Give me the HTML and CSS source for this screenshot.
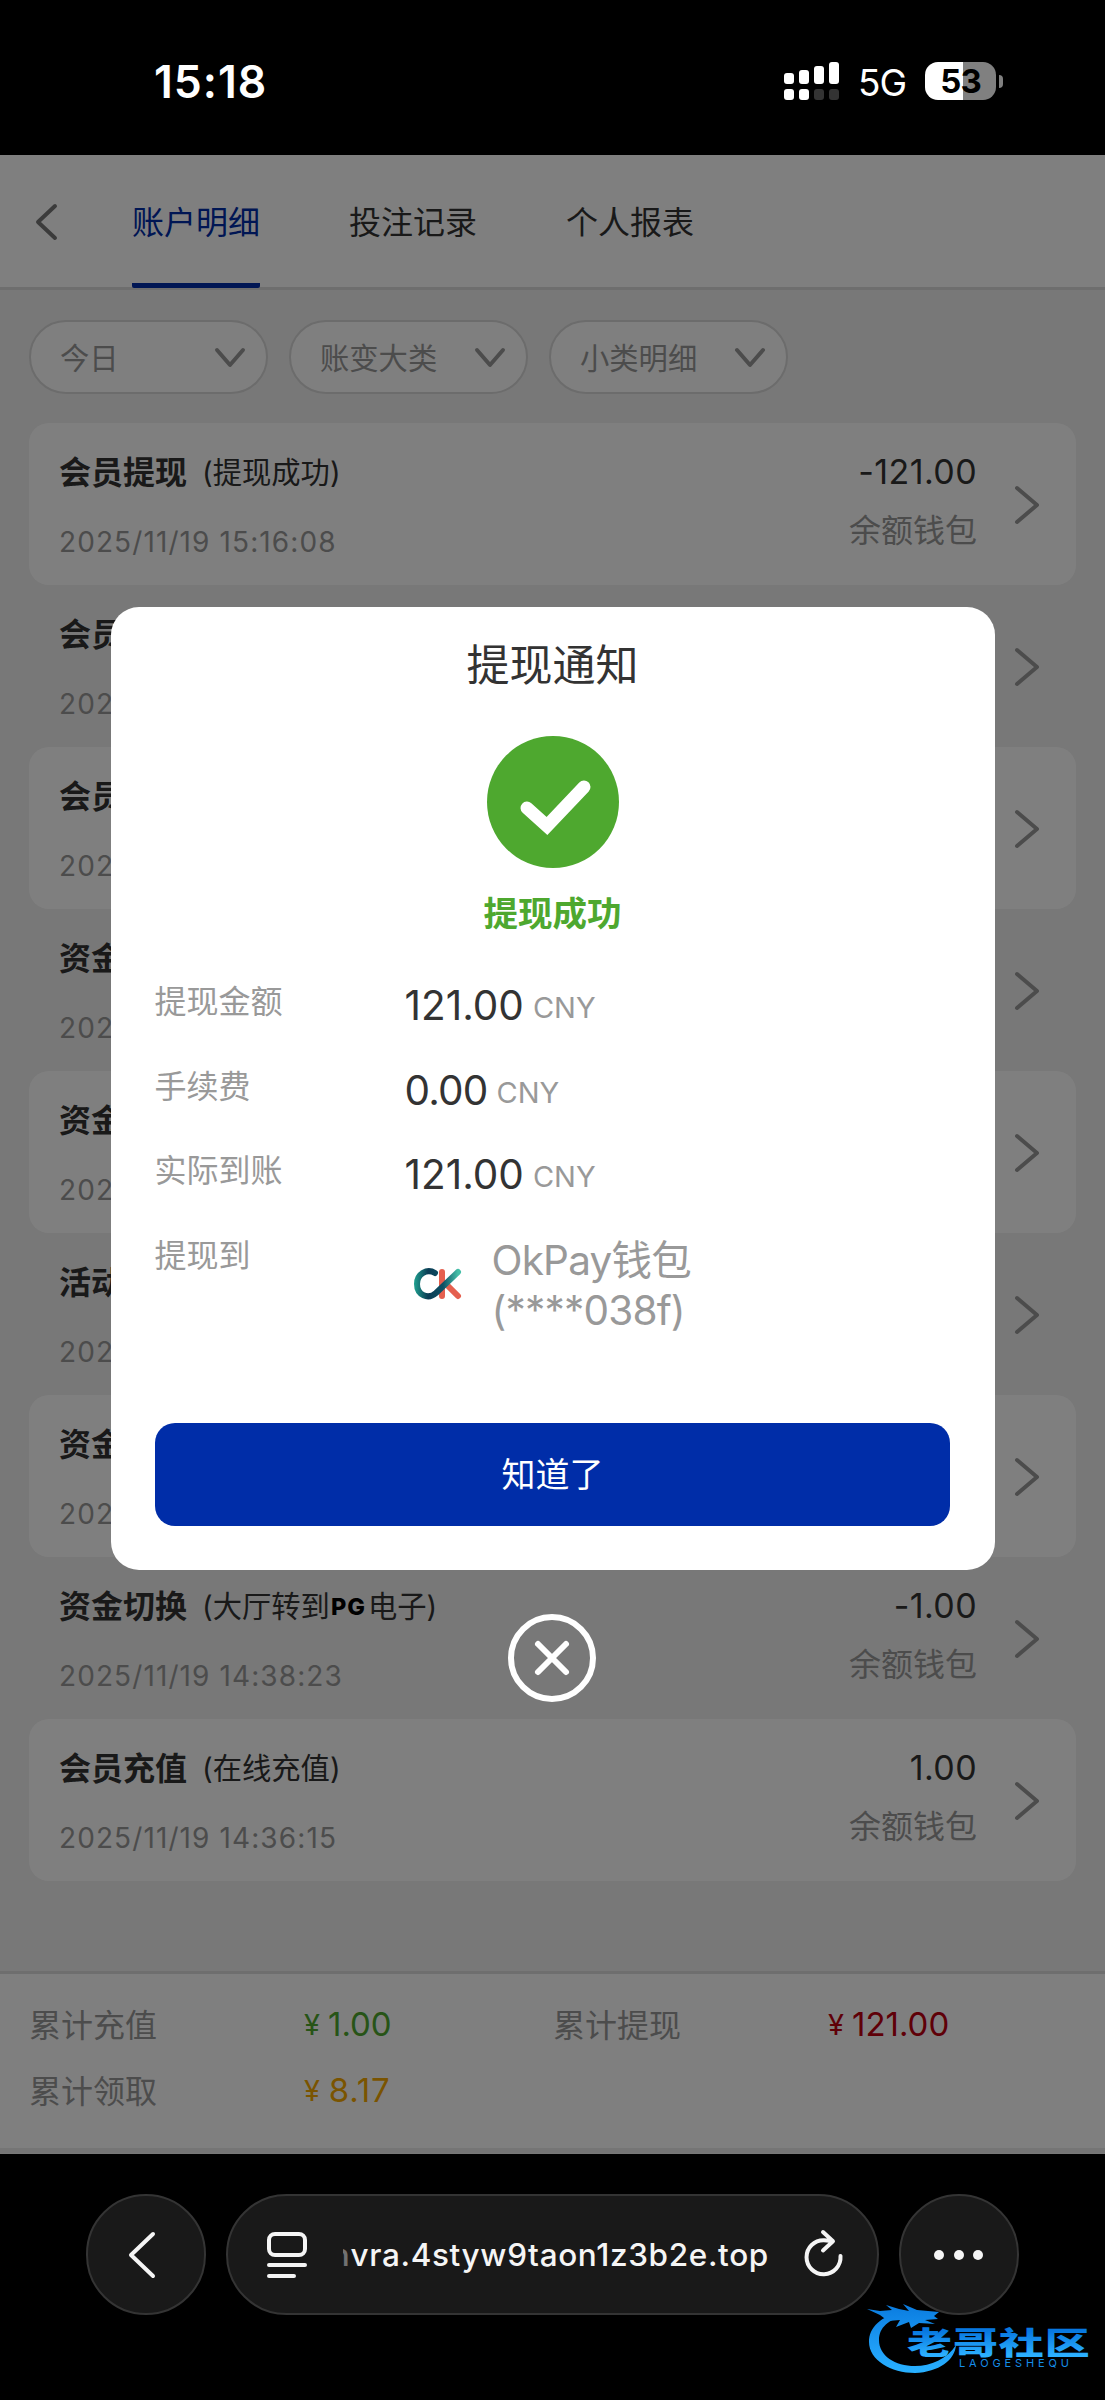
FILE: index.html
```html
<!DOCTYPE html>
<html lang="zh-CN">
<head>
<meta charset="utf-8">
<title>账户明细</title>
<link rel="stylesheet" href="styles.css">
</head>
<body>
<div class="phone">
  <header class="status">
    <span class="clock">15:18</span>
    <svg class="signal" width="56" height="38" viewBox="0 0 56 38">
      <g fill="#fff"><rect x="0" y="11" width="10" height="11" rx="3"/><rect x="15" y="8" width="10" height="14" rx="3"/><rect x="30" y="4" width="10" height="18" rx="3"/><rect x="45" y="0" width="10" height="22" rx="3"/><rect x="0" y="27" width="10" height="11" rx="3"/><rect x="15" y="27" width="10" height="11" rx="3"/></g>
      <g fill="#333"><rect x="30" y="27" width="10" height="11" rx="3"/><rect x="45" y="27" width="10" height="11" rx="3"/></g>
    </svg>
    <span class="net">5G</span>
    <span class="battery">53</span>
    <span class="nub"></span>
  </header>

  <main class="page">
    <nav class="tabs">
      <svg class="back" width="24" height="38" viewBox="0 0 24 38"><path d="M22 3 L5 19 L22 35"/></svg>
      <span class="tab active">账户明细</span>
      <span class="tab">投注记录</span>
      <span class="tab">个人报表</span>
    </nav>
    <div class="filters">
      <div class="filter">今日<svg width="32" height="22" viewBox="0 0 32 22"><path d="M3 3 L16 18 L29 3"/></svg></div>
      <div class="filter">账变大类<svg width="32" height="22" viewBox="0 0 32 22"><path d="M3 3 L16 18 L29 3"/></svg></div>
      <div class="filter">小类明细<svg width="32" height="22" viewBox="0 0 32 22"><path d="M3 3 L16 18 L29 3"/></svg></div>
    </div>
    <section class="list">
      <article class="row"><div class="info"><h3>会员提现<small>(提现成功)</small></h3><time>2025/11/19 15:16:08</time></div><div class="sum"><b>-121.00</b><span>余额钱包</span></div><svg class="go" width="28" height="42" viewBox="0 0 28 42"><path d="M4 4 L24 21 L4 38"/></svg></article>
      <article class="row"><div class="info"><h3>会员</h3><time>2025</time></div><svg class="go" width="28" height="42" viewBox="0 0 28 42"><path d="M4 4 L24 21 L4 38"/></svg></article>
      <article class="row"><div class="info"><h3>会员</h3><time>2025</time></div><svg class="go" width="28" height="42" viewBox="0 0 28 42"><path d="M4 4 L24 21 L4 38"/></svg></article>
      <article class="row"><div class="info"><h3>资金</h3><time>2025</time></div><svg class="go" width="28" height="42" viewBox="0 0 28 42"><path d="M4 4 L24 21 L4 38"/></svg></article>
      <article class="row"><div class="info"><h3>资金</h3><time>2025</time></div><svg class="go" width="28" height="42" viewBox="0 0 28 42"><path d="M4 4 L24 21 L4 38"/></svg></article>
      <article class="row"><div class="info"><h3>活动</h3><time>2025</time></div><svg class="go" width="28" height="42" viewBox="0 0 28 42"><path d="M4 4 L24 21 L4 38"/></svg></article>
      <article class="row"><div class="info"><h3>资金</h3><time>2025</time></div><svg class="go" width="28" height="42" viewBox="0 0 28 42"><path d="M4 4 L24 21 L4 38"/></svg></article>
      <article class="row"><div class="info"><h3>资金切换<small>(大厅转到<i class="pg">PG</i>电子)</small></h3><time>2025/11/19 14:38:23</time></div><div class="sum"><b>-1.00</b><span>余额钱包</span></div><svg class="go" width="28" height="42" viewBox="0 0 28 42"><path d="M4 4 L24 21 L4 38"/></svg></article>
      <article class="row"><div class="info"><h3>会员充值<small>(在线充值)</small></h3><time>2025/11/19 14:36:15</time></div><div class="sum"><b>1.00</b><span>余额钱包</span></div><svg class="go" width="28" height="42" viewBox="0 0 28 42"><path d="M4 4 L24 21 L4 38"/></svg></article>
    </section>
    <footer class="totals">
      <span>累计充值</span><b class="in"><i>¥</i>1.00</b>
      <span>累计提现</span><b class="out"><i>¥</i>121.00</b>
      <span>累计领取</span><b class="bonus"><i>¥</i>8.17</b>
    </footer>

    <div class="mask">
      <div class="dialog">
        <h2>提现通知</h2>
        <svg class="ok" width="132" height="132" viewBox="0 0 132 132"><circle cx="66" cy="66" r="66" fill="#4ea82f"/><path d="M40 72 L60 90 L97 51" fill="none" stroke="#fff" stroke-width="13" stroke-linecap="round"/></svg>
        <p class="result">提现成功</p>
        <dl>
          <dt>提现金额</dt><dd>121.00<small>CNY</small></dd>
          <dt>手续费</dt><dd class="fee">0.00<small>CNY</small></dd>
          <dt>实际到账</dt><dd>121.00<small>CNY</small></dd>
          <dt>提现到</dt>
          <dd class="wallet">
            <svg width="50" height="34" viewBox="0 0 50 34">
              <defs><linearGradient id="teal" gradientUnits="userSpaceOnUse" x1="0" y1="0" x2="50" y2="0"><stop offset="0" stop-color="#22a894"/><stop offset=".3" stop-color="#0b3d55"/><stop offset=".6" stop-color="#0d5064"/><stop offset=".9" stop-color="#45bfa8"/></linearGradient></defs>
              <g fill="none" stroke-width="6" stroke-linecap="round">
                <path stroke="#e5604f" d="M29 5 V29 M33 17 L45 29"/>
                <path stroke="url(#teal)" d="M22 6 C14 1 4 7 4 17 C4 28 15 33 23 26 L45 5"/>
              </g>
            </svg>
            <span>OkPay钱包<br>(****038f)</span>
          </dd>
        </dl>
        <button>知道了</button>
      </div>
      <svg class="close" width="90" height="90" viewBox="0 0 90 90"><circle cx="45" cy="45" r="41"/><path d="M31 31 L59 59 M59 31 L31 59"/></svg>
    </div>
  </main>

  <div class="browser">
    <div class="round prev"><svg width="30" height="48" viewBox="0 0 30 48"><path d="M26 3 L4 24 L26 45"/></svg></div>
    <div class="address">
      <svg width="40" height="48" viewBox="0 0 40 48"><rect x="3" y="3" width="36" height="21" rx="6"/><path d="M3 34 H39 M3 45 H28"/></svg>
      <span class="url"><em>n</em><span>vra.4styw9taon1z3b2e.top</span></span>
      <svg class="reload" width="40" height="48" viewBox="0 0 40 48"><path d="M28 13 L20 12.2 A17 17 0 1 0 36.5 28 M19 4 L29 13.2 L19 22.5"/></svg>
    </div>
    <div class="round"><svg width="50" height="12" viewBox="0 0 50 12"><g class="dots"><circle cx="5" cy="6" r="5"/><circle cx="25" cy="6" r="5"/><circle cx="44" cy="6" r="5"/></g></svg></div>
  </div>

  <svg class="stamp" width="230" height="90" viewBox="0 0 230 90">
    <defs><linearGradient id="sky" gradientUnits="userSpaceOnUse" x1="0" y1="10" x2="0" y2="82"><stop offset="0" stop-color="#0878dd"/><stop offset=".7" stop-color="#20a0f8"/><stop offset="1" stop-color="#28b0ff"/></linearGradient>
    <linearGradient id="skytext" x1="0" y1="0" x2="0" y2="1"><stop offset=".2" stop-color="#0878e0"/><stop offset=".85" stop-color="#2cb0ff"/></linearGradient></defs>
    <g fill="url(#sky)">
      <path d="M40 22 C15 25 4 38 4 52 C4 70 26 83 50 83 C74 82 90 70 91 55 C82 69 66 76 50 76 C30 76 14 66 14 50 C14 38 23 29 42 25 Z"/>
      <path d="M2 19 L15 21 L27 20 L21 15 L34 19 L44 21 L38 14 L52 20 L74 22 L69 26 L73 29 L60 30 L70 34 L54 33 L46 38 L44 32 L31 37 L35 30 L23 31 L15 25 Z"/>
    </g>
    <text class="stamp-name" x="0" y="0" transform="translate(42 63.5) scale(1.45 1)" fill="url(#skytext)" textLength="126">老哥社区</text>
    <text class="stamp-sub" x="94" y="77" textLength="110">LAOGESHEQU</text>
  </svg>
</div>
</body>
</html>
```
FILE: styles.css
```css
* { box-sizing: border-box; margin: 0; }
body { background: #000; font-family: Inter, "Noto Sans CJK SC", sans-serif; }
i, em { font-style: normal; }
svg { display: block; flex: none; overflow: visible; }
.phone { position: relative; width: 1105px; height: 2400px; background: #000; overflow: hidden; }

.status { display: flex; align-items: center; height: 155px; padding: 7px 0 0 154px; color: #fff; }
.clock { width: 630px; padding-top: 2px; font-size: 44.5px; font-weight: 600; line-height: 50px; letter-spacing: 1px; }
.net { width: 66px; margin-left: 18px; font-size: 37px; letter-spacing: -1px; padding-top: 3px; }
.battery { width: 71px; height: 38px; margin-left: 1px; border-radius: 13px; background: linear-gradient(90deg, #fff 53%, #808080 53%); color: #000; font-size: 33px; font-weight: 700; line-height: 38px; letter-spacing: -1px; text-align: center; }
.nub { width: 4px; height: 13px; margin-left: 3px; border-radius: 0 4px 4px 0; background: #808080; }

.page { position: relative; height: 1999px; background: #f0f0f0; color: #333; }
.tabs { display: flex; height: 135px; padding-left: 33px; background: #fff; border-bottom: 3px solid #dcdcdc; }
.back { margin: 48px 75px 0 0; }
.back path, .go path, .filter path { fill: none; stroke: #999; stroke-width: 4; stroke-linecap: round; stroke-linejoin: round; }
.back path { stroke: #777; }
.tab { margin-right: 89px; height: 133px; font-size: 32px; line-height: 136px; }
.tab.active { color: #002da8; border-bottom: 5px solid #002da8; border-radius: 2px; }

.filters { display: flex; gap: 21px; padding: 30px 29px 29px; }
.filter { display: flex; align-items: center; justify-content: space-between; width: 239px; height: 74px; padding: 0 20px 2px 29px; border: 2px solid #d8d8d8; border-radius: 37px; background: #fff; color: #999; font-size: 29.3px; }
.filter svg { margin-top: 3px; }

.list { padding: 0 29px; }
.row { display: flex; height: 162px; padding: 0 35px 0 30px; border-radius: 20px; }
.row:nth-child(odd) { background: #fff; }
.info { flex: 1; }
.info h3 { display: flex; align-items: center; height: 36px; margin-top: 29px; font-size: 32px; font-weight: 700; white-space: nowrap; }
.info small { display: flex; align-items: center; margin-left: 15px; font-size: 29.3px; font-weight: 400; }
.info time { display: block; height: 36px; margin-top: 36px; color: #999; font-size: 28px; line-height: 36px; letter-spacing: 1.1px; white-space: nowrap; }
.pg { width: 38px; padding: 5px 0 0 1px; color: #000; font-size: 23.5px; font-weight: 800; letter-spacing: 1px; }
.sum { display: flex; flex-direction: column; align-items: flex-end; width: 160px; margin-right: 36px; }
.sum b { height: 40px; margin-top: 29px; font-size: 34px; font-weight: 400; line-height: 40px; letter-spacing: .4px; }
.sum span { margin-top: 19px; color: #999; font-size: 32px; line-height: 40px; }
.go { margin-top: 60.5px; }

.totals { display: grid; grid-template-columns: 275px 249px 275px 1fr; grid-auto-rows: 66px; align-items: center; height: 182px; margin-top: 90px; padding: 16px 0 0 29px; border-top: 3px solid #dcdcdc; border-bottom: 5px solid #eaeaea; background: #fff; color: #999; font-size: 32px; }
.totals b { display: flex; align-items: center; gap: 8px; padding-top: 2px; font-weight: 400; font-size: 33px; }
.totals b i { font-size: 29px; }
.in { color: #4ea82f; }
.out { color: #bf0010; }
.bonus { color: #f5a800; letter-spacing: .8px; }

.mask { position: absolute; inset: 0; display: flex; flex-direction: column; align-items: center; padding-top: 452px; background: rgba(0,0,0,.5); }
.dialog { display: flex; flex-direction: column; align-items: center; width: 884px; height: 963px; border-radius: 28px; background: #fff; }
.dialog h2 { height: 60px; margin-top: 28px; font-size: 43px; font-weight: 400; line-height: 60px; }
.ok { margin-top: 41px; }
.result { height: 50px; margin-top: 21px; color: #4ea82f; font-size: 34.5px; font-weight: 700; line-height: 50px; }
.dialog dl { display: grid; grid-template-columns: 250px 1fr; grid-template-rows: 84.6px 84.6px 84.6px 180px; width: 796px; margin-top: 39px; }
.dialog dt { color: #999; font-size: 32px; line-height: 48px; }
.dialog dd { height: 56px; font-size: 40.5px; line-height: 56px; letter-spacing: 0; }
.dialog dd small { position: relative; top: -2px; margin-left: 9px; color: #999; font-size: 29px; }
.dialog .fee { letter-spacing: -.8px; }
.fee small { letter-spacing: 0; }
.dialog .wallet { display: flex; height: 100px; gap: 29px; padding-top: 4px; color: #999; line-height: 50px; letter-spacing: -.8px; white-space: nowrap; }
.wallet svg { margin: 31px 0 0 8px; }
.dialog button { width: 795px; height: 103px; margin-top: 11px; border: 0; border-radius: 20px; background: #002da8; color: #fff; font: 400 34px/102px Inter, "Noto Sans CJK SC", sans-serif; }
.close { margin: 43px 2px 0 0; fill: none; stroke: #fff; stroke-width: 6; stroke-linecap: round; }

.browser { display: flex; gap: 20px; padding: 40px 86px; }
.round, .address { display: flex; align-items: center; justify-content: center; height: 121px; border: 2px solid #343434; border-radius: 61px; background: #191919; }
.round { width: 120px; }
.prev { padding-right: 8px; }
.address { width: 653px; justify-content: flex-start; padding-left: 38px; }
.browser svg { fill: none; stroke: #f5f5f5; stroke-width: 4; stroke-linecap: round; stroke-linejoin: round; }
.browser .reload { margin-bottom: 6px; }
.browser .dots { fill: #f5f5f5; stroke: none; }
.url { display: flex; width: 426px; margin: 0 35px 0 37px; color: #f5f5f5; font-size: 31.5px; font-weight: 500; line-height: 40px; letter-spacing: .65px; }
.url em { width: 8px; direction: rtl; overflow: hidden; opacity: .4; }

.stamp { position: absolute; left: 865px; top: 2290px; }
.stamp-name { font-size: 31px; font-weight: 900; }
.stamp-sub { fill: #168de8; font-size: 11px; }
```
